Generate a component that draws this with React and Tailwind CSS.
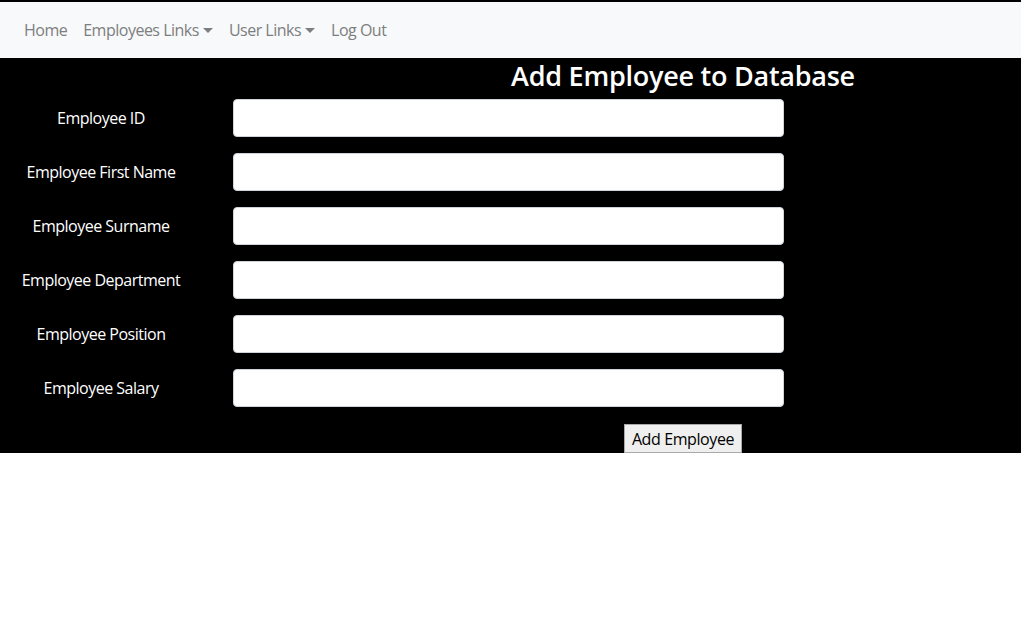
import React from "react";

const fields = [
  "Employee ID",
  "Employee First Name",
  "Employee Surname",
  "Employee Department",
  "Employee Position",
  "Employee Salary",
];

function Caret() {
  return (
    <span className="ml-[4px] inline-block w-0 h-0 align-[3px] border-l-[5px] border-r-[5px] border-t-[5px] border-l-transparent border-r-transparent border-t-[#7d7e7f]" />
  );
}

export default function App() {
  return (
    <div className="w-[1021px] h-[639px] bg-white font-['Open_Sans',sans-serif]">
      <div className="h-[2px] bg-black" />
      <nav className="h-[56px] bg-[#f8f9fa] flex items-center px-[16px] text-[16px] tracking-[-0.5px] text-[#7d7e7f]">
        <a className="px-[8px]">Home</a>
        <a className="px-[8px]">
          Employees Links
          <Caret />
        </a>
        <a className="px-[8px]">
          User Links
          <Caret />
        </a>
        <a className="px-[8px]">Log Out</a>
      </nav>
      <main className="bg-black h-[395px] text-white">
        <h2 className="pl-[345px] text-center text-[27px] tracking-[-0.25px] leading-[36px] pb-[5px] font-semibold">
          Add Employee to Database
        </h2>
        <div className="flex flex-col gap-[16px]">
          {fields.map((f) => (
            <div key={f} className="flex items-center h-[38px]">
              <label className="w-[202px] text-center text-[16px] tracking-[-0.5px]">{f}</label>
              <input
                type="text"
                className="ml-[31px] w-[551px] h-[38px] bg-white border border-[#ced4da] rounded-[4px]"
              />
            </div>
          ))}
        </div>
        <div className="pl-[345px] flex justify-center mt-[17px]">
          <button className="w-[118px] h-[29px] bg-[#efefef] border border-[#a9a9a9] text-black text-[16px] tracking-[-0.4px] leading-none">
            Add Employee
          </button>
        </div>
      </main>
    </div>
  );
}
